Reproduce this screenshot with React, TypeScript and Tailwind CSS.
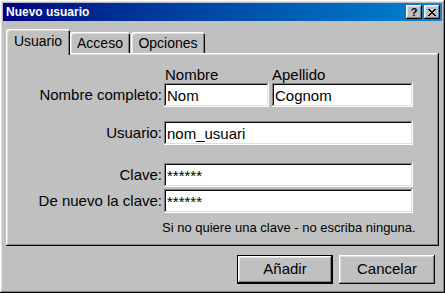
import React from "react";

const raised =
  "shadow-[inset_-1px_-1px_#0a0a0a,inset_1px_1px_#ffffff,inset_-2px_-2px_#808080,inset_2px_2px_#dfdfdf]";
const sunken =
  "shadow-[inset_-1px_-1px_#ffffff,inset_1px_1px_#808080,inset_-2px_-2px_#dfdfdf,inset_2px_2px_#0a0a0a]";

function TitleButton({ children }: { children: React.ReactNode }) {
  return (
    <div className={`w-[16px] h-[14px] bg-[#c0c0c0] flex items-center justify-center ${raised}`}>
      {children}
    </div>
  );
}

function Field({ value, className }: { value: string; className: string }) {
  return (
    <input
      readOnly
      value={value}
      className={`h-[24px] bg-white pl-[3px] pr-[3px] text-[15px] text-black outline-none ${sunken} ${className}`}
    />
  );
}

function Row({ label, children, className = "" }: { label: string; children: React.ReactNode; className?: string }) {
  return (
    <div className={`flex items-center ${className}`}>
      <div className="w-[156px] text-right pt-[1px]">{label}</div>
      <div className="ml-[2px] flex">{children}</div>
    </div>
  );
}

function Tab({ label, active, className = "" }: { label: string; active?: boolean; className?: string }) {
  return (
    <div
      className={`flex items-center justify-center rounded-t-[3px] bg-[#c0c0c0] text-[14px] shadow-[inset_1px_1px_#ffffff,inset_2px_2px_#dfdfdf,inset_-1px_0_#0a0a0a,inset_-2px_0_#808080] ${
        active ? "relative z-10 h-[26px] -mb-[2px] pb-[2px]" : "h-[21px] pt-[1px]"
      } ${className}`}
    >
      {label}
    </div>
  );
}

export default function App() {
  return (
    <div
      className={`w-[445px] h-[293px] bg-[#c0c0c0] p-[3px] flex flex-col text-black ${raised}`}
      style={{ fontFamily: '"Liberation Sans", Arial, sans-serif' }}
    >
      <div className="h-[18px] flex items-center justify-between bg-linear-to-r from-[#000080] to-[#1084d0] pl-[3px] pr-[2px]">
        <span className="text-white font-bold text-[12px] leading-none">Nuevo usuario</span>
        <div className="flex gap-[2px]">
          <TitleButton>
            <span className="text-[11px] font-bold leading-none">?</span>
          </TitleButton>
          <TitleButton>
            <svg width="8" height="7" viewBox="0 0 8 7" shapeRendering="crispEdges">
              <path
                fill="#000"
                d="M0 0h2v1h1v1h2V1h1V0h2v1H7v1H6v1H5v1h1v1h1v1h1v1H6V6H5V5H3v1H2v1H0V6h1V5h1V4h1V3H2V2H1V1H0z"
              />
            </svg>
          </TitleButton>
        </div>
      </div>

      <div className="flex-1 flex flex-col px-[3px] pt-[8px]">
        <div className="flex items-end h-[24px]">
          <Tab label="Usuario" active className="w-[64px]" />
          <Tab label="Acceso" className="w-[60px]" />
          <Tab label="Opciones" className="w-[74px] ml-[1px]" />
        </div>

        <div className={`h-[193px] flex flex-col pt-[13px] text-[15px] ${raised}`}>
          <div className="flex h-[17px] leading-[17px]">
            <div className="w-[158px]" />
            <div className="w-[108px] pl-[1px]">Nombre</div>
            <div>Apellido</div>
          </div>
          <Row label="Nombre completo:">
            <Field value="Nom" className="w-[105px]" />
            <Field value="Cognom" className="w-[141px] ml-[3px]" />
          </Row>
          <Row label="Usuario:" className="mt-[14px]">
            <Field value="nom_usuari" className="w-[249px]" />
          </Row>
          <Row label="Clave:" className="mt-[18px]">
            <Field value="******" className="w-[249px]" />
          </Row>
          <Row label="De nuevo la clave:" className="mt-[2px]">
            <Field value="******" className="w-[249px]" />
          </Row>
          <div className="mt-[7px] pl-[156px] text-[13px] leading-[15px]">
            Si no quiere una clave - no escriba ninguna.
          </div>
        </div>

        <div className="mt-[9px] flex justify-end gap-[6px] pr-[4px] text-[15px]">
          <button className="w-[96px] h-[29px] border border-black bg-[#c0c0c0]">
            <div className={`h-full flex items-center justify-center ${raised}`}>Añadir</div>
          </button>
          <button className={`w-[96px] h-[29px] bg-[#c0c0c0] flex items-center justify-center ${raised}`}>
            Cancelar
          </button>
        </div>
      </div>
    </div>
  );
}
